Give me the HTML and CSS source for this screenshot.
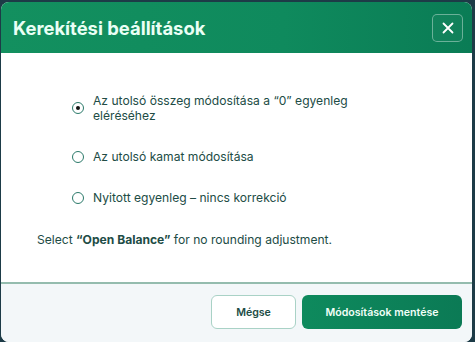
FILE: index.html
```html
<!DOCTYPE html>
<html lang="hu">
<head>
<meta charset="utf-8">
<link rel="stylesheet" href="styles.css">
</head>
<body>
<div class="modal">
  <header class="modal-header">
    <h1 class="title">Kerekítési beállítások</h1>
    <button class="close" aria-label="Bezárás">
      <svg width="12" height="12" viewBox="0 0 12 12"><path d="M1.5 1.5 L10.5 10.5 M10.5 1.5 L1.5 10.5" stroke="#fff" stroke-width="1.8" stroke-linecap="round"/></svg>
    </button>
  </header>
  <main class="modal-body">
    <div class="options">
      <label class="option">
        <span class="radio checked"></span>
        <span class="opt-text">Az utolsó összeg módosítása a “0” egyenleg eléréséhez</span>
      </label>
      <label class="option">
        <span class="radio"></span>
        <span class="opt-text">Az utolsó kamat módosítása</span>
      </label>
      <label class="option">
        <span class="radio"></span>
        <span class="opt-text">Nyitott egyenleg – nincs korrekció</span>
      </label>
    </div>
    <p class="note">Select <strong>“Open Balance”</strong> for no rounding adjustment.</p>
  </main>
  <footer class="modal-footer">
    <button class="btn btn-cancel">Mégse</button>
    <button class="btn btn-save">Módosítások mentése</button>
  </footer>
</div>
</body>
</html>
```
FILE: styles.css
```css
* { box-sizing: border-box; }
html, body { margin: 0; padding: 0; }
body {
  width: 475px;
  height: 342px;
  background: #1d3b47;
  font-family: Inter, "Noto Sans", sans-serif;
  overflow: hidden;
  padding: 2px 3px 0 1px;
}
.modal {
  height: 340px;
  background: #fff;
  border-radius: 8px;
  overflow: hidden;
  display: flex;
  flex-direction: column;
}
.modal-header {
  height: 51px;
  background: linear-gradient(90deg, #13905f 0%, #0f8a5d 60%, #0a7c55 100%);
  display: flex;
  align-items: center;
  justify-content: space-between;
  padding: 0 9px 0 12px;
  flex-shrink: 0;
}
.title {
  margin: 0;
  color: #eafff5;
  font-size: 18.4px;
  font-weight: 700;
}
.close {
  width: 31px;
  height: 28px;
  border: 1px solid rgba(255,255,255,0.38);
  border-radius: 5px;
  background: rgba(255,255,255,0.03);
  display: flex;
  align-items: center;
  justify-content: center;
  padding: 0;
}
.modal-body {
  flex: 1;
  padding: 40px 36px 0 36px;
}
.options {
  display: flex;
  flex-direction: column;
  gap: 26px;
  padding-left: 35px;
}
.option {
  display: flex;
  align-items: center;
  gap: 9px;
  color: #214c45;
  font-size: 12.1px;
  line-height: 15px;
}
.opt-text { max-width: 268px; }
.radio {
  width: 12px;
  height: 12px;
  border: 1.3px solid #2c7a6a;
  border-radius: 50%;
  flex-shrink: 0;
  display: flex;
  align-items: center;
  justify-content: center;
}
.radio.checked::after {
  content: "";
  width: 4px;
  height: 4px;
  border-radius: 50%;
  background: #111;
}
.note {
  margin: 27px 0 0 0;
  color: #214c45;
  font-size: 12.1px;
  line-height: 15px;
}
.note strong { font-weight: 700; }
.modal-footer {
  height: 60px;
  flex-shrink: 0;
  background: #f3f7f9;
  border-top: 2px solid #94bcae;
  display: flex;
  justify-content: flex-end;
  align-items: center;
  gap: 6px;
  padding: 0 10px 2px 0;
}
.btn {
  height: 34px;
  border-radius: 6px;
  font-family: Inter, "Noto Sans", sans-serif;
  font-size: 10.6px;
  font-weight: 600;
  padding: 0;
}
.btn-cancel {
  width: 85px;
  background: #fff;
  border: 1px solid #a9d2c6;
  color: #214c45;
}
.btn-save {
  width: 160px;
  background: linear-gradient(90deg, #0e8a5d, #0b7a55);
  border: none;
  color: #f2fff8;
}
```
